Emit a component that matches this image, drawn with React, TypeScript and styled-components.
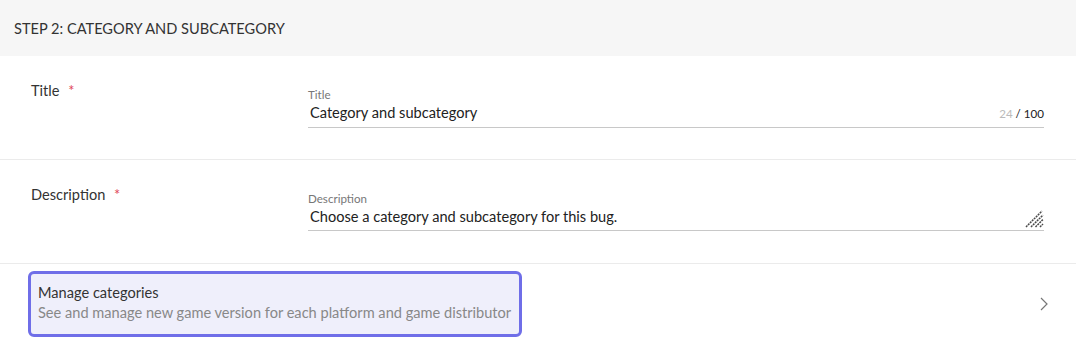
import styled, { createGlobalStyle } from "styled-components";

const GlobalStyle = createGlobalStyle`
    body {
        margin: 0;
        background: #fff;
        font-family: Lato, "Noto Sans", sans-serif;
        color: #333;
    }
`;

const App = () => {
    return (
        <>
            <GlobalStyle />
            <Header>STEP 2: CATEGORY AND SUBCATEGORY</Header>

            <Row bottom={31}>
                <Label>
                    Title <Star>*</Star>
                </Label>
                <Field>
                    <FieldLabel>Title</FieldLabel>
                    <ValueLine>
                        <Value>Category and subcategory</Value>
                        <Counter>
                            <Muted>24</Muted> / 100
                        </Counter>
                    </ValueLine>
                </Field>
            </Row>

            <Row bottom={32}>
                <Label>
                    Description <Star>*</Star>
                </Label>
                <Field>
                    <FieldLabel>Description</FieldLabel>
                    <ValueLine pad={3}>
                        <Value>Choose a category and subcategory for this bug.</Value>
                        <Grip width="19" height="18" viewBox="0 0 19 18">
                            <path
                                d="M1 17 L17 1 M6 17 L18 5 M10.5 17 L18 9.5 M15 17 L18 14"
                                stroke="#4a4a4a"
                                strokeWidth="1.5"
                                strokeDasharray="2 0.8"
                                fill="none"
                            />
                        </Grip>
                    </ValueLine>
                </Field>
            </Row>

            <LinkRow>
                <ManageBox>
                    <ManageTitle>Manage categories</ManageTitle>
                    <ManageText>
                        See and manage new game version for each platform and game distributor
                    </ManageText>
                </ManageBox>
                <svg width="8" height="14" viewBox="0 0 8 14">
                    <path d="M1 1 L7 7 L1 13" stroke="#777" strokeWidth="1.2" fill="none" />
                </svg>
            </LinkRow>
        </>
    );
};

const Header = styled.header`
    height: 56px;
    display: flex;
    align-items: center;
    padding: 0 14px;
    background-color: #f6f6f6;
    font-size: 14.6px;
    color: #333;
`;
const Row = styled.section<{ bottom: number }>`
    display: grid;
    grid-template-columns: 277px 1fr;
    padding: 25px 32px ${(props) => props.bottom}px 31px;
    border-bottom: solid 1px #ebebeb;
`;
const Label = styled.div`
    font-size: 14.6px;
    line-height: 20px;
    color: #333;
`;
const Star = styled.span`
    margin-left: 5px;
    color: #e0475b;
`;
const Field = styled.div`
    padding-top: 7px;
    border-bottom: solid 1px #c8c8c8;
`;
const FieldLabel = styled.div`
    font-size: 11.6px;
    line-height: 14px;
    color: #777;
`;
const ValueLine = styled.div<{ pad?: number }>`
    display: flex;
    align-items: flex-end;
    justify-content: space-between;
    padding: 0 0 ${(props) => props.pad ?? 4}px 2px;
`;
const Value = styled.span`
    font-size: 14.6px;
    line-height: 21px;
    color: #222;
`;
const Counter = styled.span`
    font-size: 11.6px;
    line-height: 19px;
    color: #222;
`;
const Muted = styled.span`
    color: #bbb;
`;
const Grip = styled.svg`
    margin-bottom: -1px;
`;
const LinkRow = styled.section`
    display: flex;
    align-items: center;
    justify-content: space-between;
    padding: 7px 28px 7px 28px;
`;
const ManageBox = styled.div`
    padding: 9px 8px 11px 7px;
    border: solid 3px #6f6ee8;
    border-radius: 6px;
    background-color: #efeffb;
`;
const ManageTitle = styled.div`
    font-size: 14.6px;
    line-height: 20px;
    color: #333;
`;
const ManageText = styled.div`
    font-size: 14.6px;
    line-height: 20px;
    color: #888;
`;

export default App;
